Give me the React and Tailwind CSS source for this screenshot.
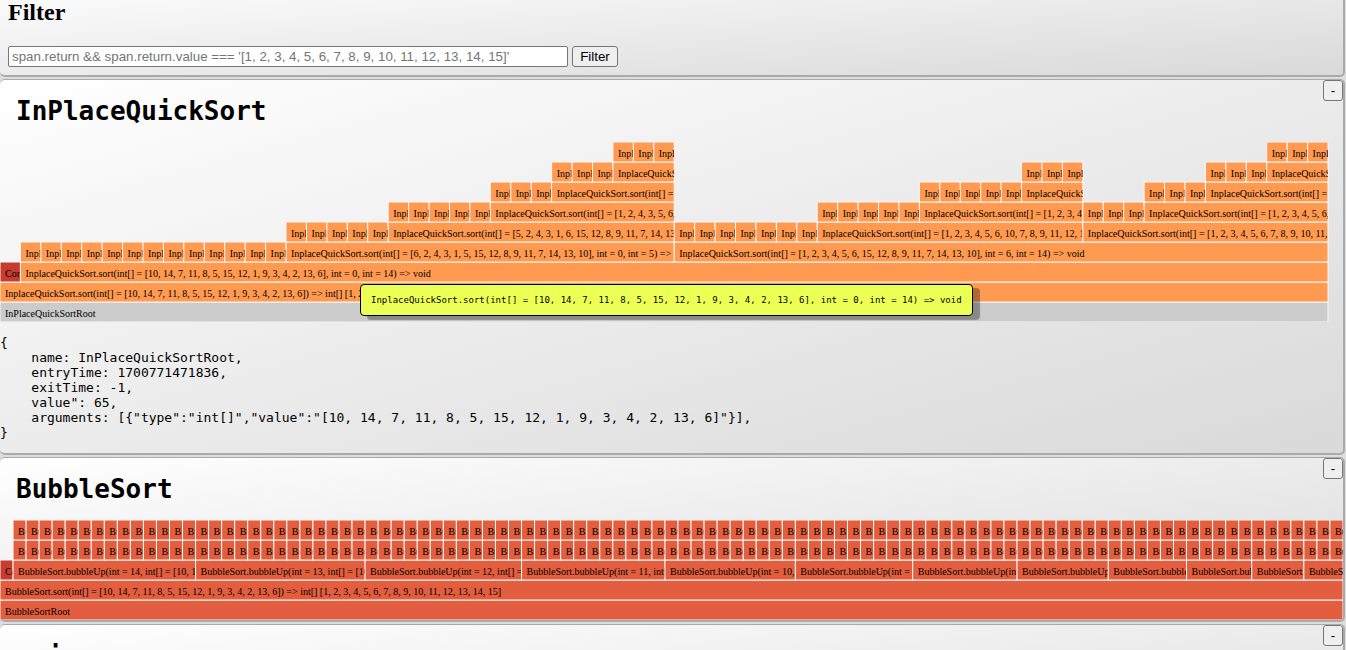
const ORANGE = '#ff9a50';
const RED = '#e25e3e';
const DARK = '#c63d2f';
const GREY = '#cbcbcb';

const ROW = 20;

const quick = (depth, from, to, args) => ({
  depth,
  from,
  to,
  color: ORANGE,
  label: `InplaceQuickSort.sort(int[] = ${args}`,
});

const leaves = (depth, from, to, color, label) =>
  Array.from({ length: to - from }, (_, i) => ({ depth, from: from + i, to: from + i + 1, color, label }));

const swaps = (depth, from, to) => leaves(depth, from, to, ORANGE, 'Inpla');

const quickSortCells = [
  { depth: 0, from: 0, to: 65, color: GREY, label: 'InPlaceQuickSortRoot' },
  quick(1, 0, 65, '[10, 14, 7, 11, 8, 5, 15, 12, 1, 9, 3, 4, 2, 13, 6]) => int[] [1, 2, 3, 4, 5, 6, 7, 8, 9, 10, 11, 12, 13, 14, 15]'),
  { depth: 2, from: 0, to: 1, color: DARK, label: 'Cons' },
  quick(2, 1, 65, '[10, 14, 7, 11, 8, 5, 15, 12, 1, 9, 3, 4, 2, 13, 6], int = 0, int = 14) => void'),
  ...swaps(3, 1, 14),
  quick(3, 14, 33, '[6, 2, 4, 3, 1, 5, 15, 12, 8, 9, 11, 7, 14, 13, 10], int = 0, int = 5) => void'),
  quick(3, 33, 65, '[1, 2, 3, 4, 5, 6, 15, 12, 8, 9, 11, 7, 14, 13, 10], int = 6, int = 14) => void'),
  ...swaps(4, 14, 19),
  quick(4, 19, 33, '[5, 2, 4, 3, 1, 6, 15, 12, 8, 9, 11, 7, 14, 13'),
  ...swaps(4, 33, 40),
  quick(4, 40, 53, '[1, 2, 3, 4, 5, 6, 10, 7, 8, 9, 11, 12, 14'),
  quick(4, 53, 65, '[1, 2, 3, 4, 5, 6, 7, 8, 9, 10, 11, 12'),
  ...swaps(5, 19, 24),
  quick(5, 24, 33, '[1, 2, 4, 3, 5, 6,'),
  ...swaps(5, 40, 45),
  quick(5, 45, 53, '[1, 2, 3, 4,'),
  ...swaps(5, 53, 56),
  quick(5, 56, 65, '[1, 2, 3, 4, 5, 6,'),
  ...swaps(6, 24, 27),
  quick(6, 27, 33, '['),
  ...swaps(6, 45, 50),
  { depth: 6, from: 50, to: 53, color: ORANGE, label: 'InplaceQuickSo' },
  ...swaps(6, 56, 59),
  quick(6, 59, 65, '['),
  ...swaps(7, 27, 30),
  { depth: 7, from: 30, to: 33, color: ORANGE, label: 'InplaceQuickSo' },
  ...swaps(7, 50, 53),
  ...swaps(7, 59, 62),
  { depth: 7, from: 62, to: 65, color: ORANGE, label: 'InplaceQuickSo' },
  ...swaps(8, 30, 33),
  ...swaps(8, 62, 65),
];

const bubbleUps = [];
for (let n = 14, at = 1; n >= 3; at += n, n -= 1) {
  bubbleUps.push({
    depth: 2,
    from: at,
    to: at + n,
    color: RED,
    label: `BubbleSort.bubbleUp(int = ${n}, int[] = [10, 14, 7`,
  });
}

const bubbleSortCells = [
  { depth: 0, from: 0, to: 103, color: RED, label: 'BubbleSortRoot' },
  {
    depth: 1,
    from: 0,
    to: 103,
    color: RED,
    label: 'BubbleSort.sort(int[] = [10, 14, 7, 11, 8, 5, 15, 12, 1, 9, 3, 4, 2, 13, 6]) => int[] [1, 2, 3, 4, 5, 6, 7, 8, 9, 10, 11, 12, 13, 14, 15]',
  },
  { depth: 2, from: 0, to: 1, color: DARK, label: 'Co' },
  ...bubbleUps,
  ...leaves(3, 1, 103, RED, 'Bu'),
  ...leaves(4, 1, 103, RED, 'Bu'),
];

function FlameGraph({ cells, total, width, rows }) {
  const unit = width / total;
  return (
    <svg width={1343} height={rows * ROW} className="block shrink-0">
      {cells.map((c, i) => {
        const x = c.from * unit;
        const y = (rows - 1 - c.depth) * ROW;
        const w = (c.to - c.from) * unit;
        return (
          <g key={i}>
            <rect x={x} y={y} width={w} height={ROW} fill={c.color} stroke="#f8f8f8" strokeWidth="1" />
            <svg x={x} y={y} width={w} height={ROW} overflow="hidden">
              <text x="5" y="15" className="font-['Liberation_Serif',serif] text-[10px]" fill="#000">
                {c.label}
              </text>
            </svg>
          </g>
        );
      })}
    </svg>
  );
}

function Panel({ className = '', children }) {
  return (
    <section
      className={`relative w-[1345px] shrink-0 overflow-hidden rounded-[5px] border-t border-r-2 border-b-2 border-[#aaa] bg-linear-to-br from-white to-[#d9d9d9] ${className}`}
    >
      {children}
    </section>
  );
}

function GraphPanel({ title, className, children }) {
  return (
    <Panel className={className}>
      <button className="absolute top-0 right-0 flex h-[21px] w-5 items-center justify-center rounded-[3px] border border-[#767676] bg-[#efefef] font-['Liberation_Sans',sans-serif] text-[13.333px] leading-none">
        -
      </button>
      <h1 className="mt-4 mb-4 ml-4 h-[30px] font-['DejaVu_Sans_Mono',monospace] text-[26px] leading-[30px] font-bold">
        {title}
      </h1>
      {children}
    </Panel>
  );
}

const details = `{
    name: InPlaceQuickSortRoot,
    entryTime: 1700771471836,
    exitTime: -1,
    value": 65,
    arguments: [{"type":"int[]","value":"[10, 14, 7, 11, 8, 5, 15, 12, 1, 9, 3, 4, 2, 13, 6]"}],
}`;

export default function App() {
  return (
    <main className="relative flex h-[650px] w-full flex-col gap-0.5 overflow-hidden bg-[#ddd] text-black">
      <Panel className="-mt-[22px] h-[99px] px-2 pt-5">
        <h2 className="font-['Liberation_Serif',serif] text-2xl leading-[27px] font-bold">Filter</h2>
        <div className="mt-5 flex gap-1">
          <input
            className="h-[21px] w-[560px] rounded-[2px] border border-[#767676] bg-white px-[3px] font-['Liberation_Sans',sans-serif] text-[13.333px] placeholder:text-[#757575]"
            placeholder="span.return && span.return.value === '[1, 2, 3, 4, 5, 6, 7, 8, 9, 10, 11, 12, 13, 14, 15]'"
          />
          <button className="h-[21px] w-[46px] rounded-[3px] border border-[#767676] bg-[#efefef] font-['Liberation_Sans',sans-serif] text-[13.333px] leading-[19px]">
            Filter
          </button>
        </div>
      </Panel>

      <GraphPanel title="InPlaceQuickSort" className="h-[376px]">
        <FlameGraph cells={quickSortCells} total={65} width={1328} rows={9} />
        <pre className="mt-[13px] font-['DejaVu_Sans_Mono',monospace] text-[13px] leading-[15px]">{details}</pre>
      </GraphPanel>

      <GraphPanel title="BubbleSort" className="h-[165px]">
        <FlameGraph cells={bubbleSortCells} total={103} width={1343} rows={5} />
      </GraphPanel>

      <GraphPanel title="main" className="h-[165px]" />

      <div className="absolute top-[284px] left-[360px] flex h-8 w-[613px] items-center rounded-[4px] border border-black bg-[#ecff55] pl-2.5 font-['DejaVu_Sans_Mono',monospace] text-[9px] leading-none whitespace-nowrap shadow-[7px_4px_1px_rgba(0,0,0,0.32)]">
        InplaceQuickSort.sort(int[] = [10, 14, 7, 11, 8, 5, 15, 12, 1, 9, 3, 4, 2, 13, 6], int = 0, int = 14) =&gt; void
      </div>
    </main>
  );
}
